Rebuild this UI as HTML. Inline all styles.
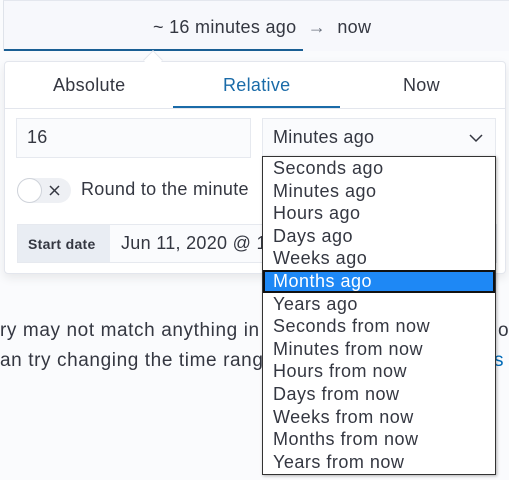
<!DOCTYPE html>
<html><head><style>
*{box-sizing:border-box;margin:0;padding:0}
body{width:509px;height:480px;overflow:hidden;background:#fafbfd;font-family:"Liberation Sans",sans-serif;color:#343741;position:relative;letter-spacing:0.3px}
.top{position:absolute;left:3px;top:0;width:506px;height:51px;background:#f7f8fc;border-left:1px solid #dfe3ea;border-top:1px solid #e4e7ee}
.top .t{position:absolute;left:149px;top:16px;font-size:18px;color:#343741}
.uline{position:absolute;left:4px;top:49px;width:299px;height:2px;background:#1a5f94}
.pop{position:absolute;left:4px;top:61px;width:502px;height:213px;background:#fff;border:1px solid #e3e6ed;border-radius:4px;box-shadow:0 4px 10px rgba(0,0,0,.08)}
.arrow{position:absolute;left:146px;top:53px;width:14px;height:14px;background:#fff;border-left:1px solid #e3e6ed;border-top:1px solid #e3e6ed;transform:rotate(45deg)}
.tab{position:absolute;top:13px;font-size:18px}
.tabline{position:absolute;left:0;top:46px;width:500px;height:1px;background:#e3e6ed}
.tabsel{position:absolute;left:168px;top:44px;width:167px;height:2px;background:#1a6ba8}
.inp{position:absolute;background:#fafbfd;border:1px solid #e6e9ef;font-size:18px;padding:8px 10px}
.tog{position:absolute;left:12px;top:116px;width:54px;height:25px;border-radius:13px;background:#eef0f4}
.knob{position:absolute;left:0;top:0;width:25px;height:25px;border-radius:50%;background:#fff;border:1px solid #cfd3da}
.sd{position:absolute;left:12px;top:162px;width:480px;height:39px;background:#fafbfd;border:1px solid #e6e9ef}
.sdl{position:absolute;left:0;top:0;width:92px;height:37px;background:#e9edf3;font-size:14px;font-weight:bold;padding:11px 10px}
.msgs{position:absolute;left:0;top:320px;width:509px;height:70px;overflow:hidden}
.msg{position:absolute;left:0;font-size:19px;color:#343741;white-space:nowrap;letter-spacing:0.6px}
.dd{position:absolute;left:262px;top:156px;width:234px;height:319px;background:#fff;border:1px solid #333;box-shadow:1px 1px 3px rgba(0,0,0,.3)}
.dd div{height:22.6px;line-height:22px;font-size:18px;padding-left:10px;color:#343741;letter-spacing:0.5px}
.dd .sel{background:#1e88f5;color:#fff;outline:2px solid #111;outline-offset:-2px}
</style></head><body>
<div class="msgs">
<div class="msg" style="top:0">ry may not match anything in</div>
<div class="msg" style="top:30px">an try changing the time range</div>
<div class="msg" style="top:0;left:498px">o</div>
<div class="msg" style="top:30px;left:494px"><span style="color:#006bb8">s</span></div>
</div>
<div class="top"><div class="t">~ 16 minutes ago <span style="color:#69707d;margin:0 6px">→</span> now</div></div>
<div class="uline"></div>
<div class="pop">
 <div class="tab" style="left:48px">Absolute</div>
 <div class="tab" style="left:218px;color:#1a6ba8">Relative</div>
 <div class="tab" style="left:398px">Now</div>
 <div class="tabline"></div><div class="tabsel"></div>
 <div class="inp" style="left:11px;top:56px;width:235px;height:40px">16</div>
 <div class="inp" style="left:257px;top:56px;width:234px;height:40px">Minutes ago<svg style="position:absolute;right:12px;top:15px" width="14" height="9" viewBox="0 0 14 9"><path d="M1 1l6 6 6-6" fill="none" stroke="#343741" stroke-width="1.5"/></svg></div>
 <div class="tog"><div class="knob"></div><svg style="position:absolute;left:32px;top:7px" width="11" height="11"><path d="M1 1l9 9M10 1l-9 9" stroke="#343741" stroke-width="1.5"/></svg></div>
 <div style="position:absolute;left:76px;top:117px;font-size:18px">Round to the minute</div>
 <div class="sd"><div class="sdl">Start date</div><div style="position:absolute;left:103px;top:8px;font-size:18px;white-space:nowrap">Jun 11, 2020 @ 15:</div></div>
</div>
<div class="arrow"></div>
<div class="dd">
<div>Seconds ago</div><div>Minutes ago</div><div>Hours ago</div><div>Days ago</div><div>Weeks ago</div><div class="sel">Months ago</div><div>Years ago</div><div>Seconds from now</div><div>Minutes from now</div><div>Hours from now</div><div>Days from now</div><div>Weeks from now</div><div>Months from now</div><div>Years from now</div>
</div>
</body></html>
